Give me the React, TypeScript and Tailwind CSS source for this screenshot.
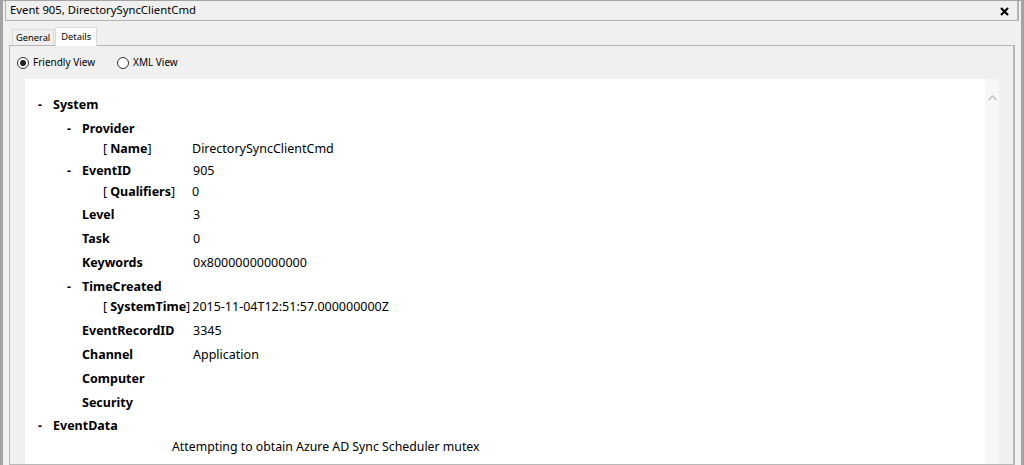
import React from "react"

const ui = { fontFamily: '"Noto Sans", "Open Sans", Arial, sans-serif' }

type Row = {
  gap: string
  indent: "top" | "mid" | "attr" | "data"
  dash?: boolean
  label?: string
  value?: string
}

const rows: Row[] = [
  { gap: "mt-0", indent: "top", dash: true, label: "System" },
  { gap: "mt-1", indent: "mid", dash: true, label: "Provider" },
  { gap: "mt-0", indent: "attr", label: "Name", value: "DirectorySyncClientCmd" },
  { gap: "mt-[2px]", indent: "mid", dash: true, label: "EventID", value: "905" },
  { gap: "mt-px", indent: "attr", label: "Qualifiers", value: "0" },
  { gap: "mt-[3px]", indent: "mid", label: "Level", value: "3" },
  { gap: "mt-1", indent: "mid", label: "Task", value: "0" },
  { gap: "mt-1", indent: "mid", label: "Keywords", value: "0x80000000000000" },
  { gap: "mt-1", indent: "mid", dash: true, label: "TimeCreated" },
  { gap: "mt-0", indent: "attr", label: "SystemTime", value: "2015-11-04T12:51:57.000000000Z" },
  { gap: "mt-1", indent: "mid", label: "EventRecordID", value: "3345" },
  { gap: "mt-1", indent: "mid", label: "Channel", value: "Application" },
  { gap: "mt-1", indent: "mid", label: "Computer" },
  { gap: "mt-1", indent: "mid", label: "Security" },
  { gap: "mt-[3px]", indent: "top", dash: true, label: "EventData" },
  { gap: "mt-px", indent: "data", value: "Attempting to obtain Azure AD Sync Scheduler mutex" },
]

function TreeRow({ row }: { row: Row }) {
  if (row.indent === "data") {
    return (
      <div className={`${row.gap} flex h-5 items-center pl-[147px] text-[12.3px] text-black`}>{row.value}</div>
    )
  }
  if (row.indent === "attr") {
    return (
      <div className={`${row.gap} flex h-5 items-center text-[12.5px] text-black`}>
        <span className="flex min-w-[167px] shrink-0 pl-[78px] pr-[2px] whitespace-nowrap">
          [ <b className="ml-[3px] text-[12.5px] font-bold">{row.label}</b>]
        </span>
        <span className="whitespace-nowrap">{row.value}</span>
      </div>
    )
  }
  const pad = row.indent === "top" ? "pl-[13px]" : "pl-[42px]"
  return (
    <div className={`${row.gap} flex h-5 items-center ${pad} text-black`}>
      <span className="w-[15px] shrink-0 text-[12.5px] font-bold">{row.dash ? "-" : ""}</span>
      <span className={`${row.indent === "mid" ? "w-[111px]" : ""} shrink-0 text-[12.5px] font-bold`}>{row.label}</span>
      {row.value && <span className="text-[12.5px]">{row.value}</span>}
    </div>
  )
}

function Radio({ checked, label }: { checked?: boolean; label: string }) {
  return (
    <label className="flex items-center gap-[4px] text-[10px] text-black">
      <span className="flex h-[12px] w-[12px] items-center justify-center rounded-full border border-[#333] bg-white">
        {checked && <span className="h-[6px] w-[6px] rounded-full bg-[#222]" />}
      </span>
      {label}
    </label>
  )
}

export default function App() {
  return (
    <div style={ui} className="flex h-[465px] w-[1024px] overflow-hidden bg-[#f0f0f0]">
      <div className="flex w-full flex-col border-l-[3px] border-t border-r-[3px] border-[#a3a3a3] bg-[#f0f0f0]">
        <div className="mx-[2px] flex h-[20px] shrink-0 items-center justify-between border-b border-l border-r-2 border-[#b4b4b4] pl-[4px] pr-[8px]">
          <span className="text-[11.3px] text-black">Event 905, DirectorySyncClientCmd</span>
          <svg width="9" height="9" viewBox="0 0 9 9" className="mt-px">
            <path d="M1 1 L8 8 M8 1 L1 8" stroke="#000" strokeWidth="2.2" />
          </svg>
        </div>
        <div className="flex flex-1 flex-col pl-[6px] pr-[6px] pt-[5px]">
          <div className="flex h-[19px] items-end pl-[3px]">
            <div className="mb-[-1px] flex h-[17px] items-center border border-b-0 border-[#d9d9d9] bg-[#f0f0f0] px-[3px] text-[9.3px] text-black">
              General
            </div>
            <div className="relative z-10 mb-[-1px] ml-px flex h-[19px] items-center border border-b-0 border-[#d9d9d9] bg-white px-[5px] text-[9.3px] text-black">
              Details
            </div>
          </div>
          <div className="flex flex-1 flex-col border border-r-2 border-[#b8b8b8] bg-[#f0f0f0] pl-[15px] pr-[14px]">
            <div className="ml-[-8px] flex h-[33px] items-center gap-[22px]">
              <Radio checked label="Friendly View" />
              <Radio label="XML View" />
            </div>
            <div className="flex flex-1 bg-white">
              <div className="flex-1 pt-[16px]">
                {rows.map((r, i) => (
                  <TreeRow key={i} row={r} />
                ))}
              </div>
              <div className="flex w-[14px] shrink-0 justify-center bg-[#f7f7f7] pt-[16px]">
                <svg width="9" height="6" viewBox="0 0 9 6">
                  <path d="M0.5 5 L4.5 1 L8.5 5" fill="none" stroke="#c2c2c2" strokeWidth="1.5" />
                </svg>
              </div>
            </div>
          </div>
        </div>
      </div>
    </div>
  )
}
